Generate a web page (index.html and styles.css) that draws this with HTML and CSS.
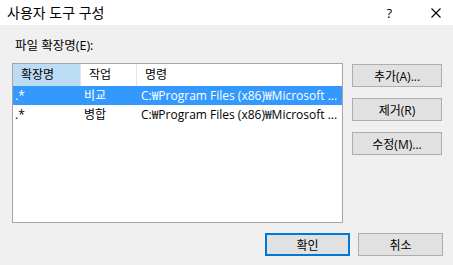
FILE: index.html
```
<!DOCTYPE html>
<html lang="ko">
<head>
  <meta charset="UTF-8" />
  <title>사용자 도구 구성</title>
  <link rel="stylesheet" href="styles.css">
</head>
<body>
<div class="dialog">
  <div class="titlebar">
    <div class="title">사용자 도구 구성</div>
    <div class="title-buttons">
      <span class="help">?</span>
      <svg class="close" width="10" height="10" viewBox="0 0 10 10">
        <path d="M0.5 0.5 L9.5 9.5 M9.5 0.5 L0.5 9.5" stroke="#000" stroke-width="1.1" fill="none" />
      </svg>
    </div>
  </div>

  <div class="content">
    <div class="label">파일 확장명(E):</div>
    <div class="main">
      <div class="list">
        <div class="row header">
          <div class="cell sorted">확장명</div>
          <div class="cell">작업</div>
          <div class="cell">명령</div>
        </div>
        <div class="row selected">
          <div class="cell">.*</div>
          <div class="cell">비교</div>
          <div class="cell">C:₩Program Files (x86)₩Microsoft ...</div>
        </div>
        <div class="row">
          <div class="cell">.*</div>
          <div class="cell">병합</div>
          <div class="cell">C:₩Program Files (x86)₩Microsoft ...</div>
        </div>
      </div>
      <div class="side-buttons">
        <button class="btn side">추가(A)...</button>
        <button class="btn side">제거(R)</button>
        <button class="btn side">수정(M)...</button>
      </div>
    </div>
    <div class="footer">
      <button class="btn footer-btn default">확인</button>
      <button class="btn footer-btn">취소</button>
    </div>
  </div>
</div>
</body>
</html>
```

FILE: styles.css
```
* {
  margin: 0;
  padding: 0;
  box-sizing: border-box;
}

body {
  font-family: "Open Sans", "Noto Sans CJK KR", sans-serif;
  font-size: 12px;
  color: #000;
  background-color: #f0f0f0;
}

.dialog {
  width: 453px;
  height: 265px;
  display: flex;
  flex-direction: column;
}

.titlebar {
  height: 25px;
  background-color: #fff;
  display: flex;
  justify-content: space-between;
  align-items: center;
  padding: 0 12px 0 7px;
}

.title {
  font-size: 14px;
  line-height: 16px;
}

.title-buttons {
  display: flex;
  align-items: center;
  gap: 39px;
}

.help {
  font-size: 13px;
}

.close {
  display: block;
}

.content {
  flex: 1;
  padding: 13px 10px 0 12px;
  display: flex;
  flex-direction: column;
}

.label {
  font-size: 12.5px;
  line-height: 16px;
  padding-left: 3px;
}

.main {
  display: flex;
  margin-top: 9px;
}

.list {
  width: 331px;
  height: 160px;
  background-color: #fff;
  border: 1px solid #a5a5a5;
}

.row {
  display: grid;
  grid-template-columns: 68px 56px 1fr;
  height: 19px;
  align-items: center;
  white-space: nowrap;
}

.row .cell {
  padding-left: 2px;
  line-height: 19px;
  overflow: hidden;
}

.row .cell:nth-child(2) {
  padding-left: 3px;
}

.row .cell:nth-child(3) {
  padding-left: 4px;
}

.header {
  height: 22px;
}

.header .cell {
  line-height: 22px;
  padding-left: 8px !important;
  border-right: 1px solid #e5e5e5;
}

.header .cell:last-child {
  border-right: none;
}

.header .sorted {
  background-color: #bcdcf4;
}

.selected {
  background-color: #3399ff;
  color: #fff;
}

.side-buttons {
  display: flex;
  flex-direction: column;
  gap: 11px;
  margin-left: 9px;
  padding-top: 1px;
}

.btn {
  font-family: inherit;
  font-size: 12px;
  background-color: #e1e1e1;
  border: 1px solid #adadad;
  color: #000;
  height: 23px;
}

.side {
  width: 90px;
}

.footer {
  display: flex;
  justify-content: flex-end;
  gap: 8px;
  margin-top: 10px;
}

.footer-btn {
  width: 85px;
}

.default {
  border: 2px solid #0078d7;
}
```
